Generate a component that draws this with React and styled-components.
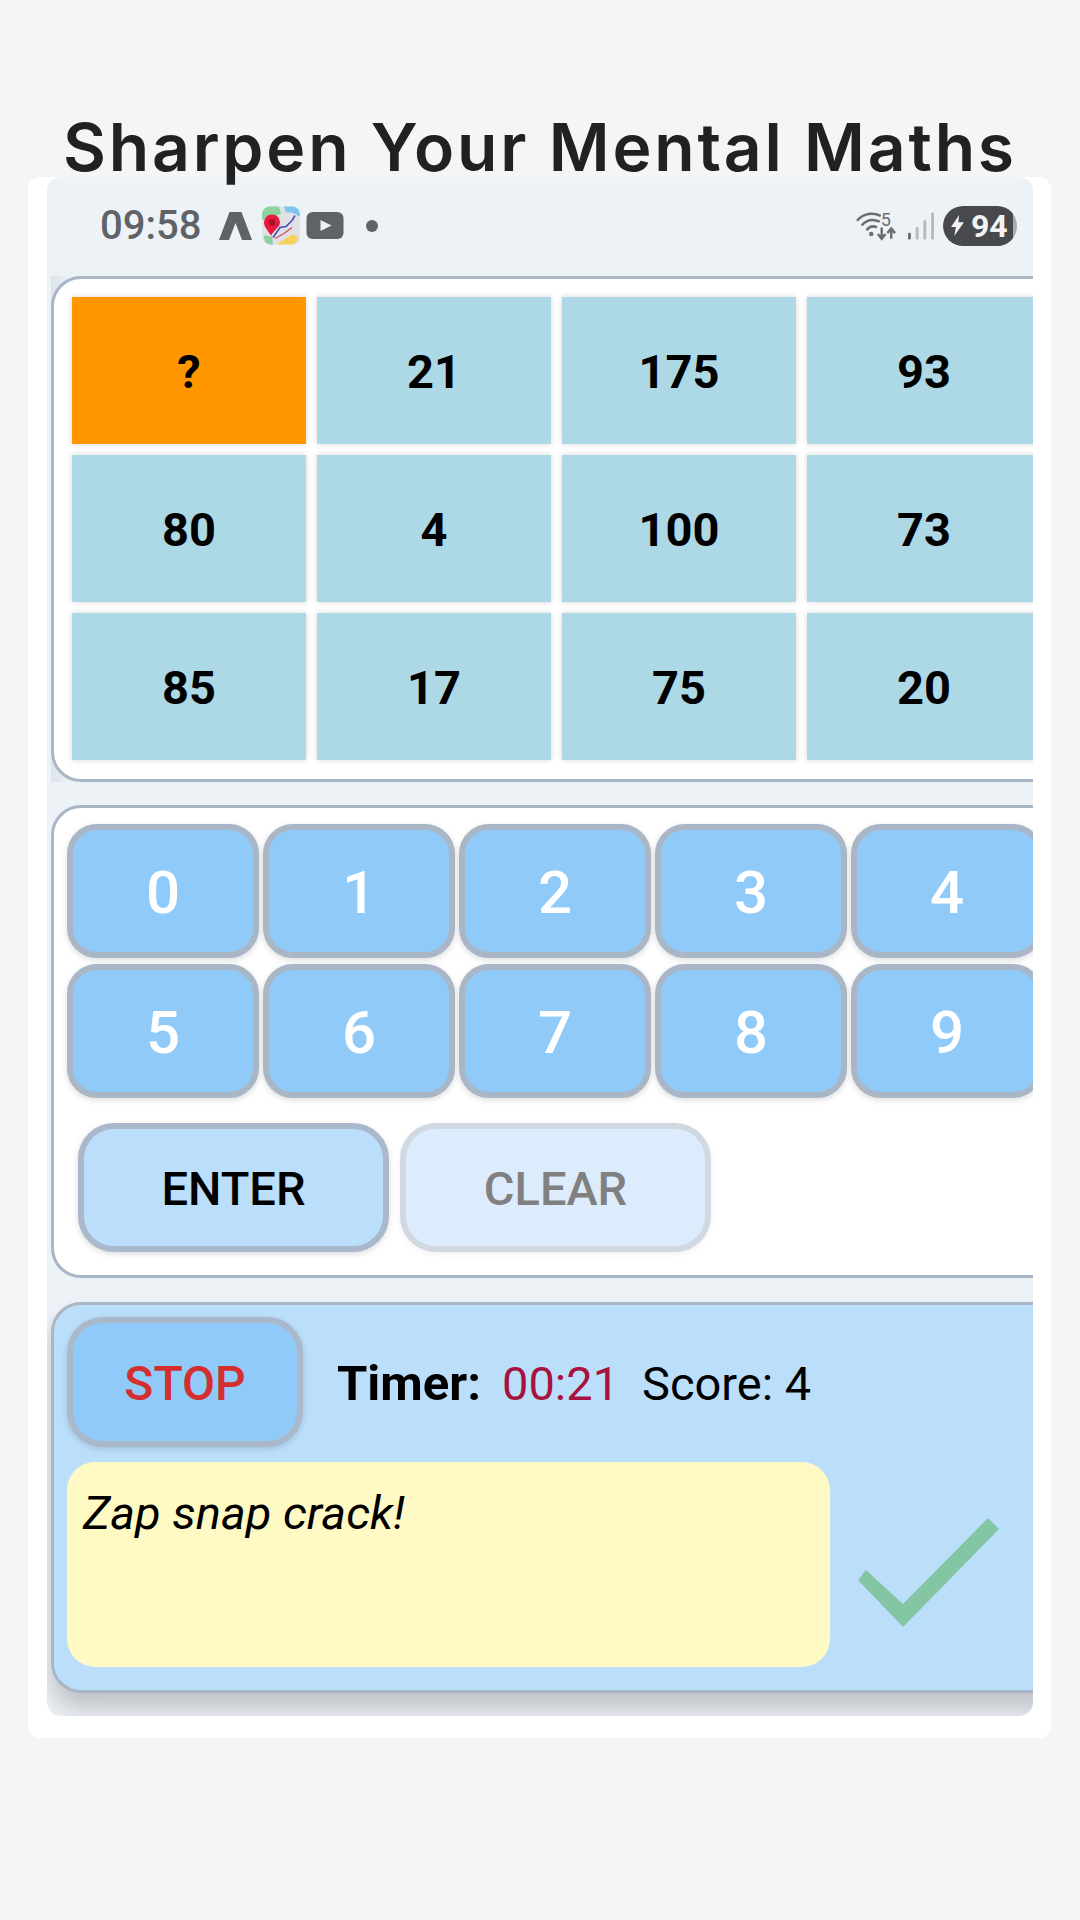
import React from "react";
import styled, { createGlobalStyle } from "styled-components";

const Global = createGlobalStyle`
  html, body { margin: 0; padding: 0; background: #f5f5f5; }
  body { font-family: Roboto, "Liberation Sans", sans-serif; }
  * { box-sizing: border-box; }
`;
const Page = styled.div`
  width: 1080px; height: 1920px; padding-top: 110px; background: #f5f5f5; overflow: hidden;
`;
const Title = styled.h1`
  position: relative; z-index: 2; margin: 0; height: 67px; line-height: 74px;
  text-align: center; font-family: Inter, sans-serif; font-weight: 600; font-size: 66px;
  letter-spacing: 2.8px; color: #212121; white-space: nowrap;
`;
const Card = styled.div`
  width: 1023px; margin-left: 28px; height: 1561px; padding: 0 18px 22px 19px;
  background: #fff; border-radius: 12px;
`;
const Screen = styled.div`
  height: 1539px; background: #edf2f7; overflow: hidden;
  border-radius: 14px; padding-left: 4px;
`;
const Status = styled.div`
  height: 99px; display: flex; align-items: center; padding: 0 16px 2px 53px; margin-left: -4px;
`;
const Clock = styled.span`
  font-family: Roboto, sans-serif; font-weight: 500; font-size: 40px; color: #5f6368;
`;
const LeftIcons = styled.div`
  display: flex; align-items: center; margin-left: 18px;
`;
const Dot = styled.span`
  width: 12px; height: 12px; border-radius: 50%; background: #5f6368; margin-left: 22px;
`;
const Spacer = styled.div`flex: 1;`;
const RightIcons = styled.div`display: flex; align-items: center; gap: 9px;`;
const Battery = styled.div`
  width: 74px; height: 40px; border-radius: 20px; overflow: hidden; background: #a9adb0;
`;
const BatteryFill = styled.div`
  width: 70px; height: 40px; background: #47494c; border-radius: 20px 0 0 20px;
  display: flex; align-items: center; padding-left: 7px; gap: 6px;
  color: #f1f3f4; font-family: Roboto, sans-serif; font-weight: 700; font-size: 32px;
`;
const CornerTint = styled.div`
  background: linear-gradient(90deg, #dde3e9, #edf2f7 20px);
  margin-bottom: 23px;
`;
const Panel = styled.section`
  width: 1120px; border: 3px solid #a9b6c6; border-radius: 30px;
  background: ${p => p.$bg || "#fff"};
  padding: ${p => p.$pad};
  margin-bottom: ${p => p.$mb || 0}px;
  box-shadow: ${p => p.$shadow || "none"};
`;
const Board = styled.div`
  display: grid; grid-template-columns: repeat(4, 234px); grid-auto-rows: 147px; gap: 11px;
`;
const Cell = styled.div`
  display: flex; align-items: center; justify-content: center; padding-top: 2px;
  background: ${p => (p.$active ? "#ff9800" : "#add8e6")};
  box-shadow: 0 0 6px rgba(0,0,0,0.16);
  font-weight: 700; font-size: 47px; color: #000;
`;
const Keys = styled.div`
  display: grid; grid-template-columns: repeat(5, 192px); grid-auto-rows: 134px; column-gap: 4px; row-gap: 6px;
`;
const Key = styled.div`
  display: flex; align-items: center; justify-content: center; padding-top: 3px;
  background: #90caf9; border: 6px solid #a9b6c6; border-radius: 30px;
  box-shadow: 0 2px 6px rgba(0,0,0,0.14);
  color: #fff; font-weight: 500; font-size: 60px;
`;
const Actions = styled.div`display: flex; gap: 11px; margin: 25px 0 0 11px;`;
const ActionButton = styled.div`
  width: 311px; height: 129px; display: flex; align-items: center; justify-content: center; padding-top: 2px;
  border-radius: 36px; border: 6px solid ${p => (p.$muted ? "#d0d9e2" : "#a9b8cb")};
  background: ${p => (p.$muted ? "#dcecfc" : "#bbdefb")};
  color: ${p => (p.$muted ? "#808080" : "#000")};
  box-shadow: 0 2px 6px rgba(0,0,0,${p => (p.$muted ? 0.06 : 0.14)});
  font-weight: 500; font-size: 47px;
`;
const Row = styled.div`display: flex; align-items: center;`;
const Stop = styled.div`
  width: 236px; height: 130px; display: flex; align-items: center; justify-content: center; padding-top: 2px;
  border-radius: 36px; border: 6px solid #a9b8cb; background: #90caf9;
  box-shadow: 0 2px 6px rgba(0,0,0,0.14);
  color: #d32f2f; font-weight: 500; font-size: 48px; margin-right: 34px;
`;
const Readout = styled.div`display: flex; align-items: center; padding-top: 3px;`;
const TimerLabel = styled.span`font-weight: 700; font-size: 49px; color: #000; margin-right: 21px;`;
const TimerValue = styled.span`font-size: 47px; color: #a8123e; margin-right: 23px;`;
const Score = styled.span`font-size: 47px; color: #000;`;
const Bottom = styled.div`display: flex; align-items: center; margin-top: 15px;`;
const Message = styled.div`
  width: 763px; height: 205px; background: #fff9c4; border-radius: 28px; padding: 20px 16px;
  font-style: italic; font-size: 47px; line-height: 62px; color: #000;
`;
const Check = styled.svg`margin: 16px 0 0 28px; flex: none;`;

const Arrow = () => (
  <svg width="33" height="28" viewBox="0 0 33 28"><path d="M10.5 0 H22.5 L33 28 H23 L16.5 11 L10 28 H0 Z" fill="#5f6368"/></svg>
);
const Maps = () => (
  <svg width="38" height="39" viewBox="0 0 38 38" style={{ marginLeft: 10 }}>
    <rect width="38" height="38" rx="8" fill="#dfe1e4"/>
    <path d="M0 8 A8 8 0 0 1 8 0 H17 L19 7 L8 13 L0 13 Z" fill="#8fd19e"/>
    <path d="M22 0 H30 A8 8 0 0 1 38 8 V10 L30 6 L24 6 Z" fill="#7cc4f2"/>
    <path d="M14 38 L30 28 L36 30 A8 8 0 0 1 30 38 Z" fill="#f7d35c"/>
    <path d="M2 29 L10 30 L11 38 H8 A8 8 0 0 1 2 30 Z" fill="#8fd19e"/>
    <path d="M11 31 L18 21 L24 20 L30 14 L33 9" fill="none" stroke="#3f51b5" strokeWidth="1.6"/>
    <path d="M13 32 L22 27 L30 21" fill="none" stroke="#d05070" strokeWidth="1.4"/>
    <path d="M9 29 C5 23 2 20 2 16 A8 8 0 0 1 18 16 C18 20 13 23 9 29 Z" fill="#e8193c"/>
    <circle cx="10" cy="16" r="3.2" fill="#a80f2a"/>
  </svg>
);
const Youtube = () => (
  <svg width="38" height="27" viewBox="0 0 37 27" style={{ marginLeft: 6 }}>
    <rect width="37" height="27" rx="6" fill="#5f6368"/>
    <path d="M14 8 L25 13.5 L14 19 Z" fill="#edf2f7"/>
  </svg>
);
const Wifi = () => (
  <svg width="40" height="29" viewBox="0 0 42 30" style={{ overflow: "visible", marginRight: 3 }}>
    <g fill="none" stroke="#6b6f73" strokeWidth="2.6">
      <path d="M1 10 C8 2 18 1 26 5"/>
      <path d="M6 15 C11 9 18 8 25 11"/>
      <path d="M11 20 C14 16 18 15 22 17"/>
      <path d="M27 17 V28 M23 24 L27 29 L31 24" />
      <path d="M37 29 V19 M33 23 L37 18 L41 23"/>
    </g>
    <circle cx="16" cy="24" r="2.4" fill="#6b6f73"/>
    <text x="26" y="15" fontFamily="Roboto, sans-serif" fontSize="19" fill="#6b6f73">5</text>
  </svg>
);
const Signal = () => (
  <svg width="26" height="28" viewBox="0 0 27 28">
    <rect x="0" y="21" width="3" height="7" rx="1" fill="#6b6f73"/>
    <rect x="8" y="15" width="3" height="13" rx="1" fill="#b5babf"/>
    <rect x="16" y="8" width="3" height="20" rx="1" fill="#b5babf"/>
    <rect x="24" y="0" width="3" height="28" rx="1" fill="#b5babf"/>
  </svg>
);
const Bolt = () => (
  <svg width="15" height="21" viewBox="0 0 16 26"><path d="M10 0 L0 15 H6 L4 26 L16 9 H9 Z" fill="#f1f3f4"/></svg>
);

const board = ["?", 21, 175, 93, 80, 4, 100, 73, 85, 17, 75, 20];
const keys = [0, 1, 2, 3, 4, 5, 6, 7, 8, 9];

export default function App() {
  return (
    <Page>
      <Global />
      <Title>Sharpen Your Mental Maths</Title>
      <Card>
        <Screen>
          <Status>
            <Clock>09:58</Clock>
            <LeftIcons>
              <Arrow />
              <Maps />
              <Youtube />
              <Dot />
            </LeftIcons>
            <Spacer />
            <RightIcons>
              <Wifi />
              <Signal />
              <Battery>
                <BatteryFill><Bolt />94</BatteryFill>
              </Battery>
            </RightIcons>
          </Status>
          <CornerTint>
            <Panel $pad="18px 0 19px 18px">
              <Board>
                {board.map((v, i) => <Cell key={i} $active={v === "?"}>{v}</Cell>)}
              </Board>
            </Panel>
          </CornerTint>
          <Panel $pad="16px 0 23px 13px" $mb={24}>
            <Keys>
              {keys.map(k => <Key key={k}>{k}</Key>)}
            </Keys>
            <Actions>
              <ActionButton>ENTER</ActionButton>
              <ActionButton $muted>CLEAR</ActionButton>
            </Actions>
          </Panel>
          <Panel $bg="#bbdefb" $pad="12px 0 23px 13px" $shadow="0 16px 24px 0 rgba(0,0,0,0.2)">
            <Row>
              <Stop>STOP</Stop>
              <Readout>
                <TimerLabel>Timer:</TimerLabel>
                <TimerValue>00:21</TimerValue>
                <Score>Score: 4</Score>
              </Readout>
            </Row>
            <Bottom>
              <Message>Zap snap crack!</Message>
              <Check width="141" height="109" viewBox="0 0 141 109">
                <polygon points="0,62 8,52 45,86 130,0 141,11 45,109" fill="#84c6a4" />
              </Check>
            </Bottom>
          </Panel>
        </Screen>
      </Card>
    </Page>
  );
}
